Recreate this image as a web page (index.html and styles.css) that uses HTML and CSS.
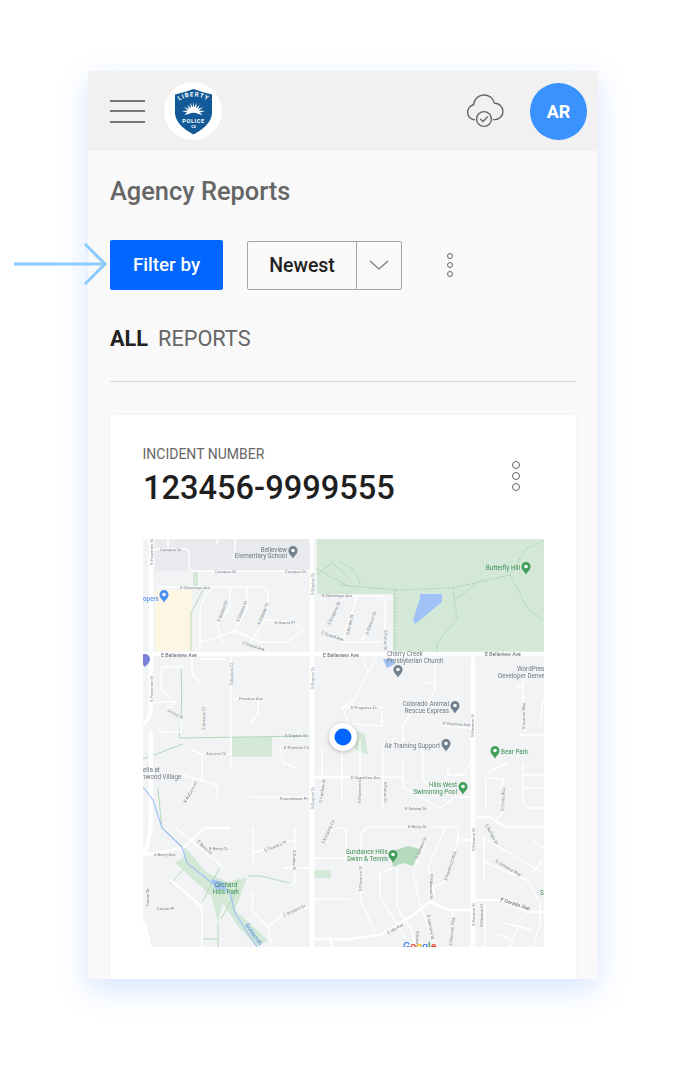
FILE: index.html
```html
<!DOCTYPE html>
<html lang="en">
<head>
<meta charset="utf-8">
<title>Agency Reports</title>
<link rel="stylesheet" href="styles.css">
</head>
<body>
<svg class="pointer" viewBox="0 0 100 46" width="100" height="46" aria-hidden="true">
  <path class="pointer-line" d="M0 23H91M71 3L91 23L71 43"/>
</svg>
<div class="panel">
  <header class="topbar">
    <div class="burger"><span></span><span></span><span></span></div>
    <div class="logo">
      <svg viewBox="0 0 40 48" width="39" height="47">
        <defs><path id="arc" d="M4 13.500Q20 3.500 36 13.500"/></defs>
        <path class="shield" d="M1 6.500Q11 4.500 20 1Q29 4.500 39 6.500V26Q38 38 20 47.500Q2 38 1 26Z"/>
        <text class="logo-t1"><textPath href="#arc" startOffset="50%" text-anchor="middle">LIBERTY</textPath></text>
        <path class="logo-w" d="M20 14L20.800 20L23.200 15L22.800 20.600L26.500 17L24.500 21.500L30 19.500L25.500 23L32 23.500L26.500 25L29.500 27.500L25 26.500Q20 24 15 26.500L10.500 27.500L13.500 25L8 23.500L14.500 23L10 19.500L15.500 21.500L13.500 17L17.200 20.600L16.800 15L19.200 20Z"/>
        <text class="logo-t2" x="20" y="35.500">POLICE</text>
        <text class="logo-t3" x="20" y="41">CO</text>
      </svg>
    </div>
    <svg class="cloud" viewBox="0 0 40 40" width="40" height="40" aria-hidden="true">
      <path class="cloud-line" d="M10 27.800H9.500A7.600 7.600 0 0 1 8.600 12.800A10.600 10.600 0 0 1 29.500 11.200A8.200 8.200 0 0 1 30 27.600H27.800"/>
      <circle class="cloud-line" cx="19" cy="27" r="7.400"/>
      <path class="cloud-line" d="M15.400 27L18 29.600L22.800 24.600"/>
    </svg>
    <div class="avatar">AR</div>
  </header>
  <main class="content">
    <h1 class="title">Agency Reports</h1>
    <div class="toolbar">
      <button class="filter">Filter by</button>
      <div class="select">
        <span class="select-value">Newest</span>
        <span class="select-arrow"><svg viewBox="0 0 20 10" width="20" height="10"><path class="chev" d="M1 1L10 9L19 1"/></svg></span>
      </div>
      <div class="kebab"><span></span><span></span><span></span></div>
    </div>
    <div class="tabs"><strong>ALL</strong><span>REPORTS</span></div>
    <div class="rule"></div>
    <section class="card">
      <div class="card-head">
        <div>
          <div class="label">INCIDENT NUMBER</div>
          <div class="number">123456-9999555</div>
        </div>
        <div class="kebab kebab-card"><span></span><span></span><span></span></div>
      </div>
      <div class="map">
        <svg viewBox="0 0 401 408" width="401" height="408">
          <g class="m-base">
          <rect class="m-bg" width="401" height="408"/>
          <rect class="m-school" x="12" width="156" height="32"/>
          <path class="m-green" d="M174 0H401V113H250V55H174Z"/>
          <path class="m-green" d="M50 33H55V48H50ZM89 198H129V218H89ZM170 331H188V339H170ZM207 190L222 195L225 216L212 210Z"/>
          <path class="m-green" d="M42 308L64 334L84 343L104 339L92 371L125 401L114 408L94 386L80 364L75 384L69 358L40 331L32 324L40 319Z"/>
          <path class="m-green2" d="M247 313L265 307L277 310L270 327L260 324L250 328Z"/>
          <path class="m-yellow" d="M12 51H49V112H12Z"/>
          <path class="m-water" d="M277 55H299V63L272 85L270 81L277 59ZM240 120H250L252 125L244 129Z"/>

          <g class="m-trail">
            <path d="M174 35L190 24L205 38M174 30L207 48M197 46L254 51L310 49L367 36M197 24Q215 30 217 46M252 51V112M310 49Q312 70 315 80Q300 95 294 105V113M340 40Q320 55 312 60M367 36L385 70L400 81M367 36L383 10L400 2"/>
          </g>
          <g class="m-gline">
            <path d="M60 51L48 74V112M36 199L167 197M36 199Q40 170 38 130M0 220L40 205M15 250Q18 280 19 289L42 310M40 331L27 345M76 330L60 362M75 384L75 408M78 380L92 355L95 340M105 337L118 337L150 345M60 400H75"/>
          </g>

          <g class="m-road">
            <path d="M12 10H42Q46 10 46 16V28Q46 32 52 32H169M25 0V8M75 0L73 6M92 0Q93 10 90 20M15 48H120Q125 50 125 58V70M69 49Q57 60 57 76V111M87 49V68L74 86L80 104M104 49V70L92 91M57 103Q70 102 80 96L92 92L117 103H144L160 91L150 83L122 81L107 104"/>
            <path d="M40 128H22Q18 128 18 136V150L33 163L25 170L38 178V193H17V186M49 118V135L57 143M57 120H82M7 163H33M90 159H115V175L107 184M60 173V193M88 118V206"/>
            <path d="M197 57H238Q242 57 242 65V100Q242 103 235 103H197M214 58L200 101M232 76L219 101"/>
            <path d="M219 118L225 134L234 118M225 134L217 148L212 160L200 168L205 185L239 187V172M197 168H239M292 118V150L282 172H269L260 186V210M280 144H292M300 186L327 189M380 136V188M374 148H380M400 160L397 188M375 196H401"/>
            <path d="M49 211L59 215H87M88 201V229M59 215V241M40 236L74 246L75 264M50 243L45 264M107 258H167M137 208L140 224L154 229"/>
            <path d="M179 209V264M170 238H207M199 201V260M179 303Q190 285 203 290V320M170 319H207M170 360H207"/>
            <path d="M32 288L47 301L82 330M110 289V324M110 314L152 301M152 289V344L145 346M140 329H167"/>
            <path d="M27 341L59 368V408M110 353L109 371L125 388L129 408M125 388L140 376L167 368"/>
            <path d="M217 201V240M240 207V268M260 221V248L297 269L312 258H329M280 205V241L290 250M305 228V236H320L327 224M197 238H260M218 300V361L232 394M230 288Q218 288 218 300M230 288H264M290 288H315V301L304 341L292 348M315 301H330M302 289L285 328L292 358M283 301L270 334L277 364L289 398M237 334L250 329M237 334V358L263 400M254 329V368L269 391L272 408M310 371L307 408"/>
            <path d="M344 234Q350 230 364 224M343 238V268M344 238L360 241V273L354 280M380 224V264L387 269H401M379 236H401M379 249H401M344 301L400 334M341 298V341M342 323L384 341L397 364V385L390 408M342 361V408M360 384L390 391M374 389L367 408M356 395L370 402M390 300Q395 308 401 308M390 334L400 320"/>
          </g>
          <g class="m-major">
            <path d="M287 363L307 371H330M334 278H347L362 288H401M330 361H357L384 373H401M197 401L237 396L267 378L287 363M2 316L40 309L62 289H87M27 341Q40 350 59 368M167 400H210M170 238H207M188 400V408"/>
          </g>
          <g class="m-highway">
            <path d="M0 115H401M8 0V170Q8 178 0 186M8 192V275Q8 300 0 318M169 0V408M330 118V408"/>
          </g>
          <path class="m-wedge" d="M0 384L3 384L9 408H0Z"/>
          <path class="m-river" d="M0 248L10 261L19 289L39 308L44 324L69 344L87 354L92 374L114 408"/>
          <path class="m-water" d="M68 340L80 343L84 350L72 350Z"/>

          <g class="m-street">
            <text x="17" y="12">Campus Dr</text>
            <text x="72" y="34">Campus Dr</text>
            <text x="142" y="34">Campus Dr</text>
            <text x="37" y="50">E Oberengo Ave</text>
            <text x="179" y="58">E Oberengo Ave</text>
            <text x="132" y="85">E Grand Pl</text>
            <text transform="translate(99 105) rotate(18)" x="0" y="0">E Grand Ave</text>
            <text transform="translate(178 95) rotate(18)" x="0" y="0">E Grand Ave</text>
            <text transform="translate(77 83) rotate(-70)" x="0" y="0">S Boston St</text>
            <text transform="translate(96 83) rotate(-68)" x="0" y="0">S Clinton St</text>
            <text transform="translate(117 86) rotate(-68)" x="0" y="0">S Chester St</text>
            <text transform="translate(187 86) rotate(-65)" x="0" y="0">S Emporia St</text>
            <text transform="translate(206 96) rotate(-78)" x="0" y="0">S Elmira St</text>
            <text transform="translate(225 96) rotate(-70)" x="0" y="0">S Glencoe St</text>
            <text transform="translate(241 91) rotate(90)" x="0" y="0">S Fulton St</text>
            <text transform="translate(10 26) rotate(-90)" x="0" y="0">S Yosemite St</text>
            <text transform="translate(10 163) rotate(-90)" x="0" y="0">S Yosemite St</text>
            <text transform="translate(171 56) rotate(-90)" x="0" y="0">S Dayton St</text>
            <text transform="translate(171 150) rotate(-90)" x="0" y="0">S Dayton St</text>
            <text transform="translate(171 270) rotate(-90)" x="0" y="0">S Dayton St</text>
            <text transform="translate(90 146) rotate(-90)" x="0" y="0">S Boston Ct</text>
            <text transform="translate(62 191) rotate(-90)" x="0" y="0">S Xanadu Ct</text>
            <text transform="translate(24 172) rotate(30)" x="0" y="0">Orchid Pl</text>
            <text x="96" y="161">Prentice Ave</text>
            <text x="142" y="198">S Dayton St</text>
            <text x="63" y="216">Autumn Dr</text>
            <text x="141" y="210">E Prentice Cir</text>
            <text x="137" y="261">Foundstone Pl</text>
            <text x="11" y="317">S Berry Ave</text>
            <text transform="translate(54 303) rotate(45)" x="0" y="0">E Berry Pl</text>
            <text x="66" y="311">E Berry Ct</text>
            <text transform="translate(122 313) rotate(-22)" x="0" y="0">E Flowers Pl</text>
            <text transform="translate(150 311) rotate(90)" x="0" y="0">S Dallas St</text>
            <text x="14" y="371">Canon Pl</text>
            <text transform="translate(6 367) rotate(-90)" x="0" y="0">Canon Dr</text>
            <text transform="translate(43 264) rotate(-60)" x="0" y="0">E Autumn Pl</text>
            <text transform="translate(141 378) rotate(-25)" x="0" y="0">E Orchard Dr</text>
            <text transform="translate(179 264) rotate(-82)" x="0" y="0">S Ivanhoe St</text>
            <text transform="translate(181 305) rotate(-65)" x="0" y="0">S Emporia Cir</text>
            <text x="208" y="170">E Progress Dr</text>
            <text transform="translate(300 186) rotate(3)" x="0" y="0">E Prentice Ave</text>
            <text x="208" y="240">E Chestline Ave</text>
            <text transform="translate(241 243) rotate(90)" x="0" y="0">S Fulton Ct</text>
            <text transform="translate(218 264) rotate(-90)" x="0" y="0">S Florence Ct</text>
            <text x="262" y="271">E Selena St</text>
            <text x="265" y="289">E Berry Dr</text>
            <text transform="translate(219 352) rotate(-90)" x="0" y="0">S Florence St</text>
            <text transform="translate(275 320) rotate(-68)" x="0" y="0">S Geneva St</text>
            <text transform="translate(304 342) rotate(-72)" x="0" y="0">S Kenwood Way</text>
            <text transform="translate(287 335) rotate(90)" x="0" y="0">S Hibiscus St</text>
            <text transform="translate(245 395) rotate(-28)" x="0" y="0">E Ida Ave</text>
            <text transform="translate(284 376) rotate(80)" x="0" y="0">S Jasmine St</text>
            <text transform="translate(309 407) rotate(-85)" x="0" y="0">S Hanover Way</text>
            <text transform="translate(273 392) rotate(90)" x="0" y="0">S Galena</text>
            <text transform="translate(331 198) rotate(-90)" x="0" y="0">S Havana St</text>
            <text transform="translate(332 312) rotate(-90)" x="0" y="0">S Havana St</text>
            <text transform="translate(332 387) rotate(-90)" x="0" y="0">S Havana St</text>
            <text transform="translate(342 286) rotate(62)" x="0" y="0">S Ruffalo Dr</text>
            <text transform="translate(352 323) rotate(30)" x="0" y="0">S Jamaica Way</text>
            <text transform="translate(340 388) rotate(-90)" x="0" y="0">S Havana Ct</text>
            <text transform="translate(361 272) rotate(-88)" x="0" y="0">S Fruita Way</text>
            <text transform="translate(382 190) rotate(-90)" x="0" y="0">S Ironton Way</text>
          </g>
          <g class="m-street-b">
            <text x="18" y="118">E Belleview Ave</text>
            <text x="180" y="118">E Belleview Ave</text>
            <text x="342" y="117">E Belleview Ave</text>
            <text transform="translate(357 362) rotate(18)" x="0" y="0">E Dorado Ave</text>
          </g>

          <g class="m-poi">
            <text x="144" y="12.500" text-anchor="end">Belleview</text>
            <text x="144" y="19" text-anchor="end">Elementary School</text>
            <text x="244" y="117">Cherry Creek</text>
            <text x="244" y="123.500">Presbyterian Church</text>
            <text x="374" y="132">WordPress</text>
            <text x="355" y="138.500">Developer Denver</text>
            <text x="306" y="167" text-anchor="end">Colorado Animal</text>
            <text x="306" y="173.500" text-anchor="end">Rescue Express</text>
            <text x="297" y="209" text-anchor="end">Air Training Support</text>
            <text x="0" y="233">ella at</text>
            <text x="-1" y="239.500">nwood Village</text>
          </g>
          <g class="m-poi-g">
            <text x="377" y="31" text-anchor="end">Butterfly Hill</text>
            <text x="358" y="215">Bear Park</text>
            <text x="314" y="248" text-anchor="end">Hills West</text>
            <text x="314" y="254.500" text-anchor="end">Swimming Pool</text>
            <text x="203" y="315">Sundance Hills</text>
            <text x="204" y="321.500">Swim &amp; Tennis</text>
            <text x="83" y="348" text-anchor="middle">Orchard</text>
            <text x="83" y="354.500" text-anchor="middle">Hills Park</text>
            <text x="397" y="356">S</text>
          </g>
          <text class="m-poi-b" x="0" y="62">opers</text>
          <text class="m-river-t" transform="translate(102 386) rotate(55)" x="0" y="0">Goldsmith</text>

          <g class="pin-grey">
            <path d="M150 19.500C148 16 145.500 15 145.500 11.500A4.500 4.500 0 0 1 154.500 11.500C154.500 15 152 16 150 19.500Z"/>
            <path d="M255 138.500C253 135 250.500 134 250.500 130.500A4.500 4.500 0 0 1 259.500 130.500C259.500 134 257 135 255 138.500Z"/>
            <path d="M312 174.500C310 171 307.500 170 307.500 166.500A4.500 4.500 0 0 1 316.500 166.500C316.500 170 314 171 312 174.500Z"/>
            <path d="M303 212.500C301 209 298.500 208 298.500 204.500A4.500 4.500 0 0 1 307.500 204.500C307.500 208 305 209 303 212.500Z"/>
          </g>
          <g class="pin-green">
            <path d="M383 35.500C381 32 378.500 31 378.500 27.500A4.500 4.500 0 0 1 387.500 27.500C387.500 31 385 32 383 35.500Z"/>
            <path d="M352 219.500C350 216 347.500 215 347.500 211.500A4.500 4.500 0 0 1 356.500 211.500C356.500 215 354 216 352 219.500Z"/>
            <path d="M320 255.500C318 252 315.500 251 315.500 247.500A4.500 4.500 0 0 1 324.500 247.500C324.500 251 322 252 320 255.500Z"/>
            <path d="M250 323.500C248 320 245.500 319 245.500 315.500A4.500 4.500 0 0 1 254.500 315.500C254.500 319 252 320 250 323.500Z"/>
          </g>
          <g class="pin-blue">
            <path d="M21 63.500C19 60 16.500 59 16.500 55.500A4.500 4.500 0 0 1 25.500 55.500C25.500 59 23 60 21 63.500Z"/>
          </g>
          <path class="pin-purple" d="M2 128C0 125 -3 124 -3 120A5 5 0 0 1 7 120C7 124 4 125 2 128Z"/>
          <g class="pin-dot">
            <circle cx="150" cy="11.500" r="1.800"/><circle cx="255" cy="130.500" r="1.800"/><circle cx="312" cy="166.500" r="1.800"/><circle cx="303" cy="204.500" r="1.800"/>
            <circle cx="383" cy="27.500" r="1.800"/><circle cx="352" cy="211.500" r="1.800"/><circle cx="320" cy="247.500" r="1.800"/><circle cx="250" cy="315.500" r="1.800"/><circle cx="21" cy="55.500" r="1.800"/>
          </g>
          <text class="m-google" x="260" y="411"><tspan class="g-b">G</tspan><tspan class="g-r">o</tspan><tspan class="g-y">o</tspan><tspan class="g-b">g</tspan><tspan class="g-g">l</tspan><tspan class="g-r">e</tspan></text>
          </g>
          <circle class="m-halo" cx="200" cy="198" r="14"/>
          <circle class="m-dot" cx="200" cy="198" r="8.500"/>
        </svg>
      </div>
    </section>
  </main>
</div>
</body>
</html>
```
FILE: styles.css
```css
* { box-sizing: border-box; }
html, body { margin: 0; padding: 0; background: #fff; }
body {
  width: 686px;
  height: 1072px;
  padding: 71px 88px 0;
  overflow: hidden;
  position: relative;
  font-family: Roboto, "Liberation Sans", sans-serif;
}
.pointer { position: absolute; left: 14px; top: 241px; z-index: 2; }
.pointer-line { fill: none; stroke: #8bcbff; stroke-width: 3; }
.panel {
  width: 510px;
  height: 908px;
  background: #f9f9f9;
  box-shadow: 0 10px 28px rgba(70, 135, 255, .22);
  overflow: hidden;
}
.topbar {
  height: 80px;
  background: #f1f1f1;
  display: flex;
  align-items: center;
  padding: 0 11px 0 22px;
}
.burger { width: 35px; display: flex; flex-direction: column; gap: 8.500px; }
.burger span { display: block; height: 2px; background: #777; }
.logo {
  width: 58px;
  height: 58px;
  margin-left: 19px;
  border-radius: 50%;
  background: #fff;
  display: flex;
  align-items: center;
  justify-content: center;
}
.shield { fill: #125a97; }
.logo-w { fill: #fff; }
.logo-t1 { font: 700 6.300px Roboto, sans-serif; letter-spacing: 1px; fill: #fff; }
.logo-t2 { font: 700 5.800px Roboto, sans-serif; letter-spacing: .6px; fill: #fff; text-anchor: middle; }
.logo-t3 { font: 700 3.500px Roboto, sans-serif; fill: #fff; text-anchor: middle; }
.cloud { margin-left: auto; margin-top: 2px; }
.cloud-line { fill: none; stroke: #666; stroke-width: 1.400; }
.avatar {
  width: 57px;
  height: 57px;
  margin-left: 25px;
  border-radius: 50%;
  background: #3a92ff;
  color: #fff;
  font-size: 18px;
  font-weight: 700;
  display: flex;
  align-items: center;
  justify-content: center;
}
.content { padding: 26px 22px 0; }
.title {
  margin: 0;
  font-size: 25.400px;
  line-height: 29px;
  font-weight: 500;
  color: #666;
}
.toolbar { margin-top: 34px; height: 50px; display: flex; align-items: center; }
.filter {
  width: 113px;
  height: 50px;
  border: 0;
  border-radius: 2px;
  background: #0066ff;
  color: #fff;
  font: 500 18.800px Roboto, sans-serif;
}
.select {
  margin-left: 24px;
  width: 155px;
  height: 49px;
  border: 1.500px solid #a6a6a6;
  border-radius: 2px;
  display: flex;
}
.select-value {
  flex: 1;
  display: flex;
  align-items: center;
  justify-content: center;
  font-size: 19.500px;
  font-weight: 500;
  color: #1f1f1f;
}
.select-arrow {
  width: 45px;
  border-left: 1.500px solid #a6a6a6;
  display: flex;
  align-items: center;
  justify-content: center;
}
.chev { fill: none; stroke: #777; stroke-width: 1.200; }
.kebab { display: flex; flex-direction: column; gap: 3px; margin-left: 45px; }
.kebab span {
  display: block;
  width: 6px;
  height: 6px;
  border: 1.200px solid #666;
  border-radius: 50%;
}
.tabs {
  margin-top: 36px;
  font-size: 21.700px;
  line-height: 26px;
  display: flex;
  gap: 10px;
  color: #666;
}
.tabs strong { color: #222; font-weight: 700; }
.rule { margin-top: 29px; height: 1px; background: #d9d9d9; }
.card {
  margin-top: 33px;
  background: #fff;
  border-radius: 2px;
  padding: 31px 32px 32px 33px;
  box-shadow: 0 0 4px rgba(0, 0, 0, .04);
}
.card-head { display: flex; justify-content: space-between; align-items: flex-start; }
.label { margin-left: -.5px; font-size: 14px; line-height: 16px; color: #666; }
.number { margin-top: 6px; font-size: 32.600px; line-height: 40px; font-weight: 500; color: #1f1f1f; }
.kebab-card { margin: 15px 24px 0 0; gap: 3px; }
.kebab-card span { width: 8px; height: 8px; }
.map { height: 408px; margin-top: 31px; overflow: hidden; }
.map svg { display: block; }
.m-base { filter: blur(.3px); }
.m-bg { fill: #f1f3f4; }
.m-school { fill: #e8eaed; }
.m-green { fill: #d3e8d6; }
.m-green2 { fill: #b5dbbd; }
.m-yellow { fill: #fdf6e3; }
.m-water { fill: #a0c2f6; }
.m-wedge { fill: #fff; }
.m-trail path { fill: none; stroke: #a5cfaf; stroke-width: 1; stroke-dasharray: 2 1.500; }
.m-gline path { fill: none; stroke: #b3d9bb; stroke-width: 1; }
.m-road path { fill: none; stroke: #fff; stroke-width: 1.400; }
.m-major path { fill: none; stroke: #fff; stroke-width: 2.500; }
.m-highway path { fill: none; stroke: #fff; stroke-width: 4.500; }
.m-river { fill: none; stroke: #a0c2f6; stroke-width: 1.200; }
.m-street { font: 4.300px Roboto, sans-serif; fill: #80868b; }
.m-street-b { font: 5.200px Roboto, sans-serif; fill: #5f6368; }
.m-poi { font: 6.300px Roboto, sans-serif; fill: #70777f; }
.m-poi-g { font: 6.300px Roboto, sans-serif; fill: #3f8f55; }
.m-poi-b { font: 6.300px Roboto, sans-serif; fill: #4285f4; }
.m-river-t { font: 5.500px Roboto, sans-serif; fill: #3e7de0; }
.pin-grey { fill: #70808e; }
.pin-green { fill: #43a05c; }
.pin-blue { fill: #4a90f0; }
.pin-purple { fill: #7a80d8; }
.pin-dot { fill: #fff; }
.m-google { font: 500 10.500px Roboto, sans-serif; }
.g-b { fill: #4285f4; }
.g-r { fill: #ea4335; }
.g-y { fill: #fbbc05; }
.g-g { fill: #34a853; }
.m-halo { fill: #fff; filter: drop-shadow(0 1px 2px rgba(0, 0, 0, .25)); }
.m-dot { fill: #0066ff; }
```
